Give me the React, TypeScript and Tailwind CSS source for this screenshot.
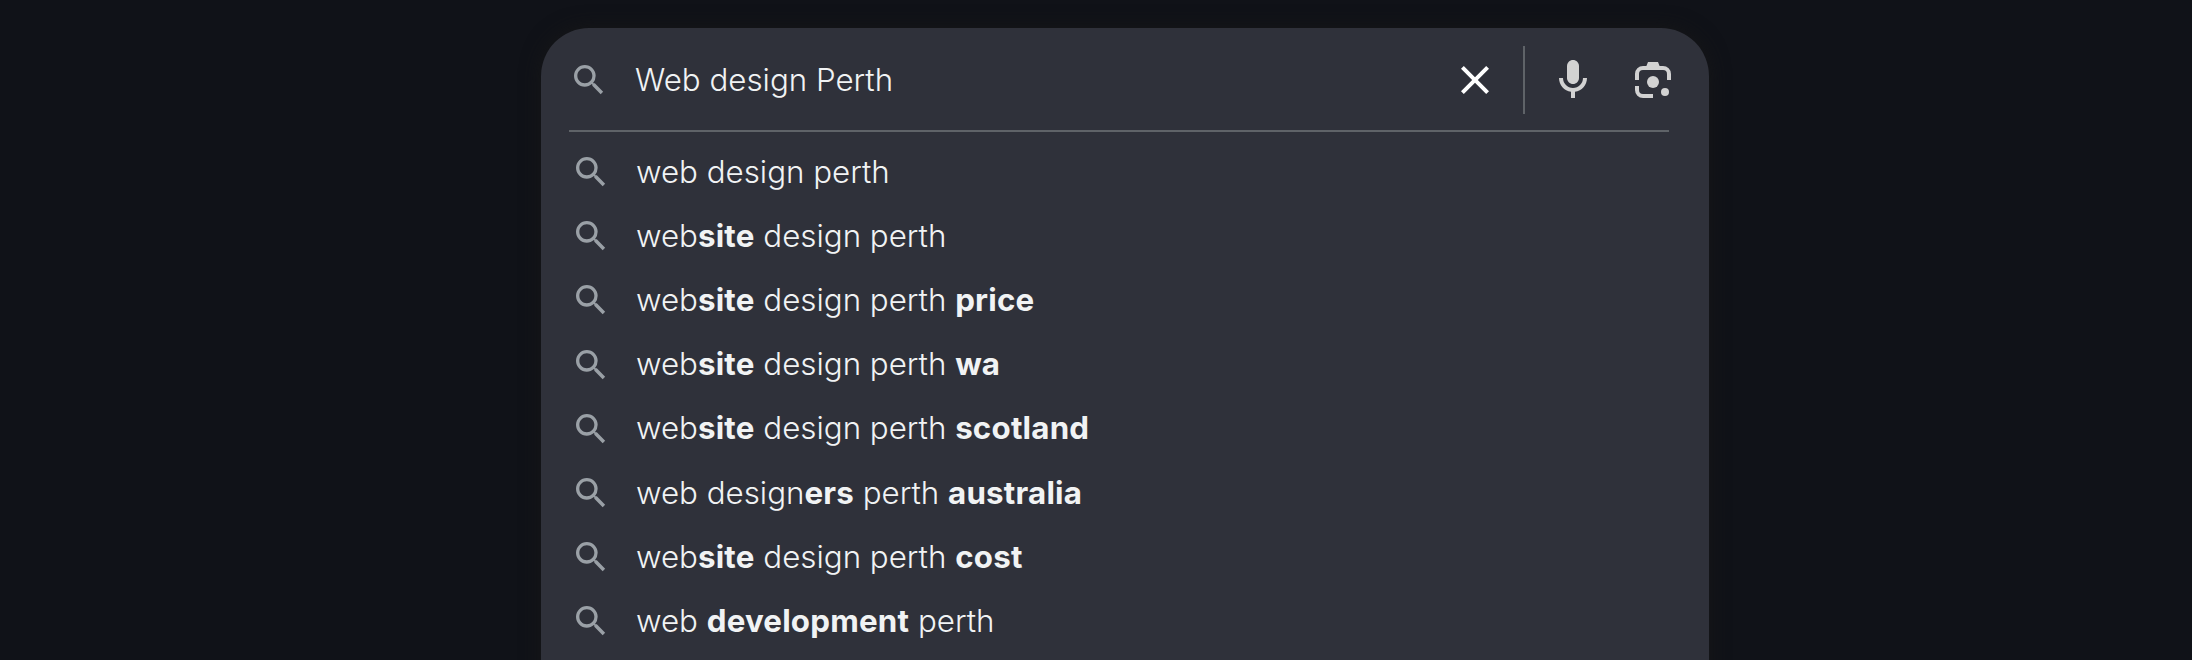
const suggestions: [string, boolean][][] = [
  [["web design perth", false]],
  [["web", false], ["site", true], [" design perth", false]],
  [["web", false], ["site", true], [" design perth ", false], ["price", true]],
  [["web", false], ["site", true], [" design perth ", false], ["wa", true]],
  [["web", false], ["site", true], [" design perth ", false], ["scotland", true]],
  [["web design", false], ["ers", true], [" perth ", false], ["australia", true]],
  [["web", false], ["site", true], [" design perth ", false], ["cost", true]],
  [["web ", false], ["development", true], [" perth", false]],
];

function SearchIcon() {
  return (
    <svg viewBox="0 0 24 24" className="w-[40px] h-[40px] shrink-0 text-[#9aa0a6]" fill="currentColor">
      <path d="M15.5 14h-.79l-.28-.27A6.47 6.47 0 0 0 16 9.5 6.5 6.5 0 1 0 9.5 16c1.61 0 3.09-.59 4.23-1.57l.27.28v.79l5 4.99L20.49 19l-4.99-5zm-6 0C7.01 14 5 11.99 5 9.5S7.01 5 9.5 5 14 7.01 14 9.5 11.99 14 9.5 14z" />
    </svg>
  );
}

export default function App() {
  return (
    <div className="h-[660px] overflow-hidden bg-[#101218] pt-[28px] font-['Inter',sans-serif]">
      <div className="ml-[541px] w-[1168px] h-[700px] rounded-t-[48px] bg-[#2f313a] shadow-[0_0_20px_rgba(23,23,23,0.9)]">
        <div className="flex items-center h-[102px] pt-[2px] pl-[28px] pr-[32px]">
          <SearchIcon />
          <span className="ml-[26px] flex-1 text-[31.3px] font-[360] text-[#f1f3f4]">Web design Perth</span>
          <svg viewBox="0 0 24 24" className="w-[48px] h-[48px] text-white" fill="currentColor">
            <path d="M19 6.41 17.59 5 12 10.59 6.41 5 5 6.41 10.59 12 5 17.59 6.41 19 12 13.41 17.59 19 19 17.59 13.41 12z" />
          </svg>
          <div className="ml-[24px] mr-[24px] w-[2px] h-[68px] bg-[#5f6368]" />
          <svg viewBox="0 0 24 24" className="w-[48px] h-[48px] text-[#d2d2d2]" fill="currentColor">
            <path d="M12 14c1.66 0 3-1.34 3-3V5c0-1.66-1.34-3-3-3S9 3.34 9 5v6c0 1.66 1.34 3 3 3z" />
            <path d="M17 11c0 2.76-2.24 5-5 5s-5-2.24-5-5H5c0 3.53 2.61 6.43 6 6.92V21h2v-3.08c3.39-.49 6-3.39 6-6.92h-2z" />
          </svg>
          <svg viewBox="0 0 24 24" className="ml-[32px] w-[48px] h-[48px] text-[#d2d2d2]" fill="currentColor">
            <circle cx="12" cy="13" r="3" />
            <circle cx="18" cy="18" r="2" />
            <path d="M3 12V9a4 4 0 0 1 4-4h1.7l.8-2h5l.8 2H17a4 4 0 0 1 4 4v3h-2V9a2 2 0 0 0-2-2H7a2 2 0 0 0-2 2v3z" />
            <path d="M3 15v2a4 4 0 0 0 4 4h5v-2H7a2 2 0 0 1-2-2v-2z" />
          </svg>
        </div>
        <div className="ml-[28px] h-[2px] w-[1100px] bg-[#5f6368]" />
        <div className="pt-[8px]">
          {suggestions.map((parts, i) => (
            <div key={i} className="flex items-center h-[64.2px] pl-[30px]">
              <SearchIcon />
              <span className="ml-[25px] whitespace-pre text-[31.3px] font-[360] text-[#f1f3f4]">
                {parts.map(([text, bold], j) => (
                  <span key={j} className={bold ? "font-bold tracking-[0.2px]" : ""}>{text}</span>
                ))}
              </span>
            </div>
          ))}
        </div>
      </div>
    </div>
  );
}
